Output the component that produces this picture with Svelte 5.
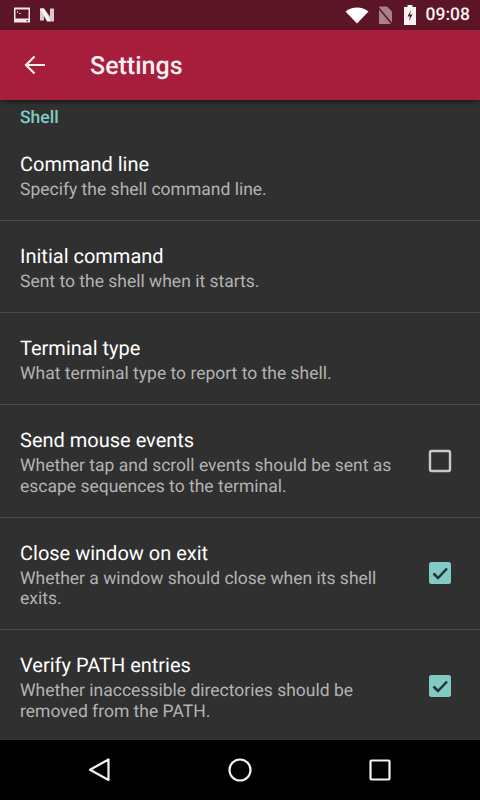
<script>
  const rows = [
    { title: 'Command line', summary: 'Specify the shell command line.' },
    { title: 'Initial command', summary: 'Sent to the shell when it starts.' },
    { title: 'Terminal type', summary: 'What terminal type to report to the shell.' },
    { title: 'Send mouse events', summary: 'Whether tap and scroll events should be sent as escape sequences to the terminal.', check: false },
    { title: 'Close window on exit', summary: 'Whether a window should close when its shell exits.', check: true },
    { title: 'Verify PATH entries', summary: 'Whether inaccessible directories should be removed from the PATH.', check: true },
  ]
</script>

<div class="screen">
  <div class="status">
    <div class="status-left">
      <svg width="20" height="20" viewBox="0 0 20 20">
        <path d="M2 2.500h16v15h-16z" fill="#f3e9eb" />
        <path d="M3.500 4.500h13v9h-13z" fill="#5c1526" />
        <path d="M5 6l1 1-1 1M7 8.500h2" stroke="#f3e9eb" stroke-width="0.8" fill="none" />
        <path d="M14.500 15h1.500v1.200h-1.500z" fill="#5c1526" />
      </svg>
      <svg width="20" height="20" viewBox="0 0 20 20">
        <path d="M3 3.500l4 0 6 8v-8h4v13h-3l-7-9v8h-4z" fill="#d9c8cc" />
        <path d="M3 3.500h4l7 13h-4z" fill="#f7f2f3" />
      </svg>
    </div>
    <div class="status-right">
      <svg class="wifi" width="24" height="18" viewBox="0 0 24 18">
        <path d="M0.500 5.500c6.500-5.500 16.500-5.500 23 0l-11.500 12z" fill="#fff" />
      </svg>
      <svg class="sim" width="18" height="20" viewBox="0 0 18 20">
        <path d="M3 1.500h8l5 5v12.500h-13z" fill="#a8808a" />
        <path d="M1 1l15 18" stroke="#5c1526" stroke-width="1.500" />
      </svg>
      <svg class="battery" width="14" height="22" viewBox="0 0 14 22">
        <path d="M4.500 1h5v2h3.500v18h-12v-18h3.500z" fill="#f7f2f3" />
        <path d="M8 6l-3.500 6.500h2.500l-1 4.500 3.500-6.500h-2.500z" fill="#5c1526" />
      </svg>
      <span class="clock">09:08</span>
    </div>
  </div>

  <header class="toolbar">
    <svg class="back" width="24" height="24" viewBox="0 0 24 24">
      <path d="M22 12h-19M11.500 3.500l-8.500 8.500 8.500 8.500" fill="none" stroke="#fbeef1" stroke-width="2.200" />
    </svg>
    <h1>Settings</h1>
  </header>

  <main class="list">
    <div class="section">Shell</div>
    {#each rows as row, i}
      <div class="row" class:last={i === rows.length - 1}>
        <div class="text">
          <div class="title">{row.title}</div>
          <div class="summary">{row.summary}</div>
        </div>
        {#if row.check === true}
          <svg class="box" width="24" height="24" viewBox="0 0 24 24">
            <rect x="1" y="1" width="22" height="22" rx="2.500" fill="#80cbc4" />
            <path d="M5.500 12.500l4.500 4.500 9-9.500" fill="none" stroke="#263238" stroke-width="2.500" />
          </svg>
        {:else if row.check === false}
          <svg class="box" width="24" height="24" viewBox="0 0 24 24">
            <rect x="2" y="2" width="20" height="20" rx="1.500" fill="none" stroke="#c9c9c9" stroke-width="2.400" />
          </svg>
        {/if}
      </div>
    {/each}
  </main>

  <nav class="navbar">
    <svg width="24" height="26" viewBox="0 0 24 26">
      <path d="M21.500 2.500v20.500l-18.500-10.200z" fill="none" stroke="#f2f2f2" stroke-width="2.200" stroke-linejoin="round" />
    </svg>
    <svg width="24" height="24" viewBox="0 0 24 24">
      <circle cx="12" cy="12" r="10.500" fill="none" stroke="#f2f2f2" stroke-width="2.200" />
    </svg>
    <svg width="24" height="24" viewBox="0 0 24 24">
      <rect x="2.500" y="2.500" width="19" height="19" rx="1" fill="none" stroke="#f2f2f2" stroke-width="2.200" />
    </svg>
  </nav>
</div>

<style>
  :global(*) { margin: 0; padding: 0; box-sizing: border-box; }
  :global(body) { font-family: Roboto, sans-serif; background: #303030; text-rendering: geometricPrecision; }

  .screen { width: 480px; height: 800px; display: flex; flex-direction: column; overflow: hidden; background: #303030; }

  .status {
    height: 30px; background: #5c1526; color: #fff;
    display: flex; justify-content: space-between; align-items: center;
    padding: 0 10px 0 12px;
  }
  .status-left { display: flex; align-items: center; gap: 5px; }
  .status-right { display: flex; align-items: center; }
  .wifi { margin-right: 7px; }
  .sim { margin-right: 9px; }
  .battery { margin-right: 9px; }
  .clock { font-size: 17.5px; font-weight: 500; color: #f7f2f3; }

  .toolbar {
    height: 70px; background: #a61e3c; display: flex; align-items: center;
    padding-left: 23px; box-shadow: 0 2px 4px rgba(0, 0, 0, 0.45); position: relative;
  }
  .toolbar h1 { font-size: 25px; font-weight: 500; color: #fbeef1; margin-left: 43px; padding-top: 3px; }

  .list { flex: 1; min-height: 0; overflow: hidden; }
  .section { padding: 8px 20px 0; height: 29px; font-size: 17.5px; line-height: 21px; font-weight: 500; color: #80cbc4; }

  .row {
    display: flex; align-items: center; justify-content: space-between;
    padding: 22px 28px 19.5px 20px; border-bottom: 1px solid #4b4b4b;
  }
  .row.last { border-bottom: none; }
  .text { width: 376px; }
  .title { font-size: 20px; line-height: 26px; color: #fff; }
  .summary { font-size: 17.5px; line-height: 20.5px; color: #b3b3b3; margin-top: 3px; }
  .box { flex-shrink: 0; margin-bottom: 3px; }

  .navbar {
    height: 60px; background: #000; display: flex; align-items: center;
    justify-content: space-between; padding: 0 88px 0 87px;
  }
</style>
